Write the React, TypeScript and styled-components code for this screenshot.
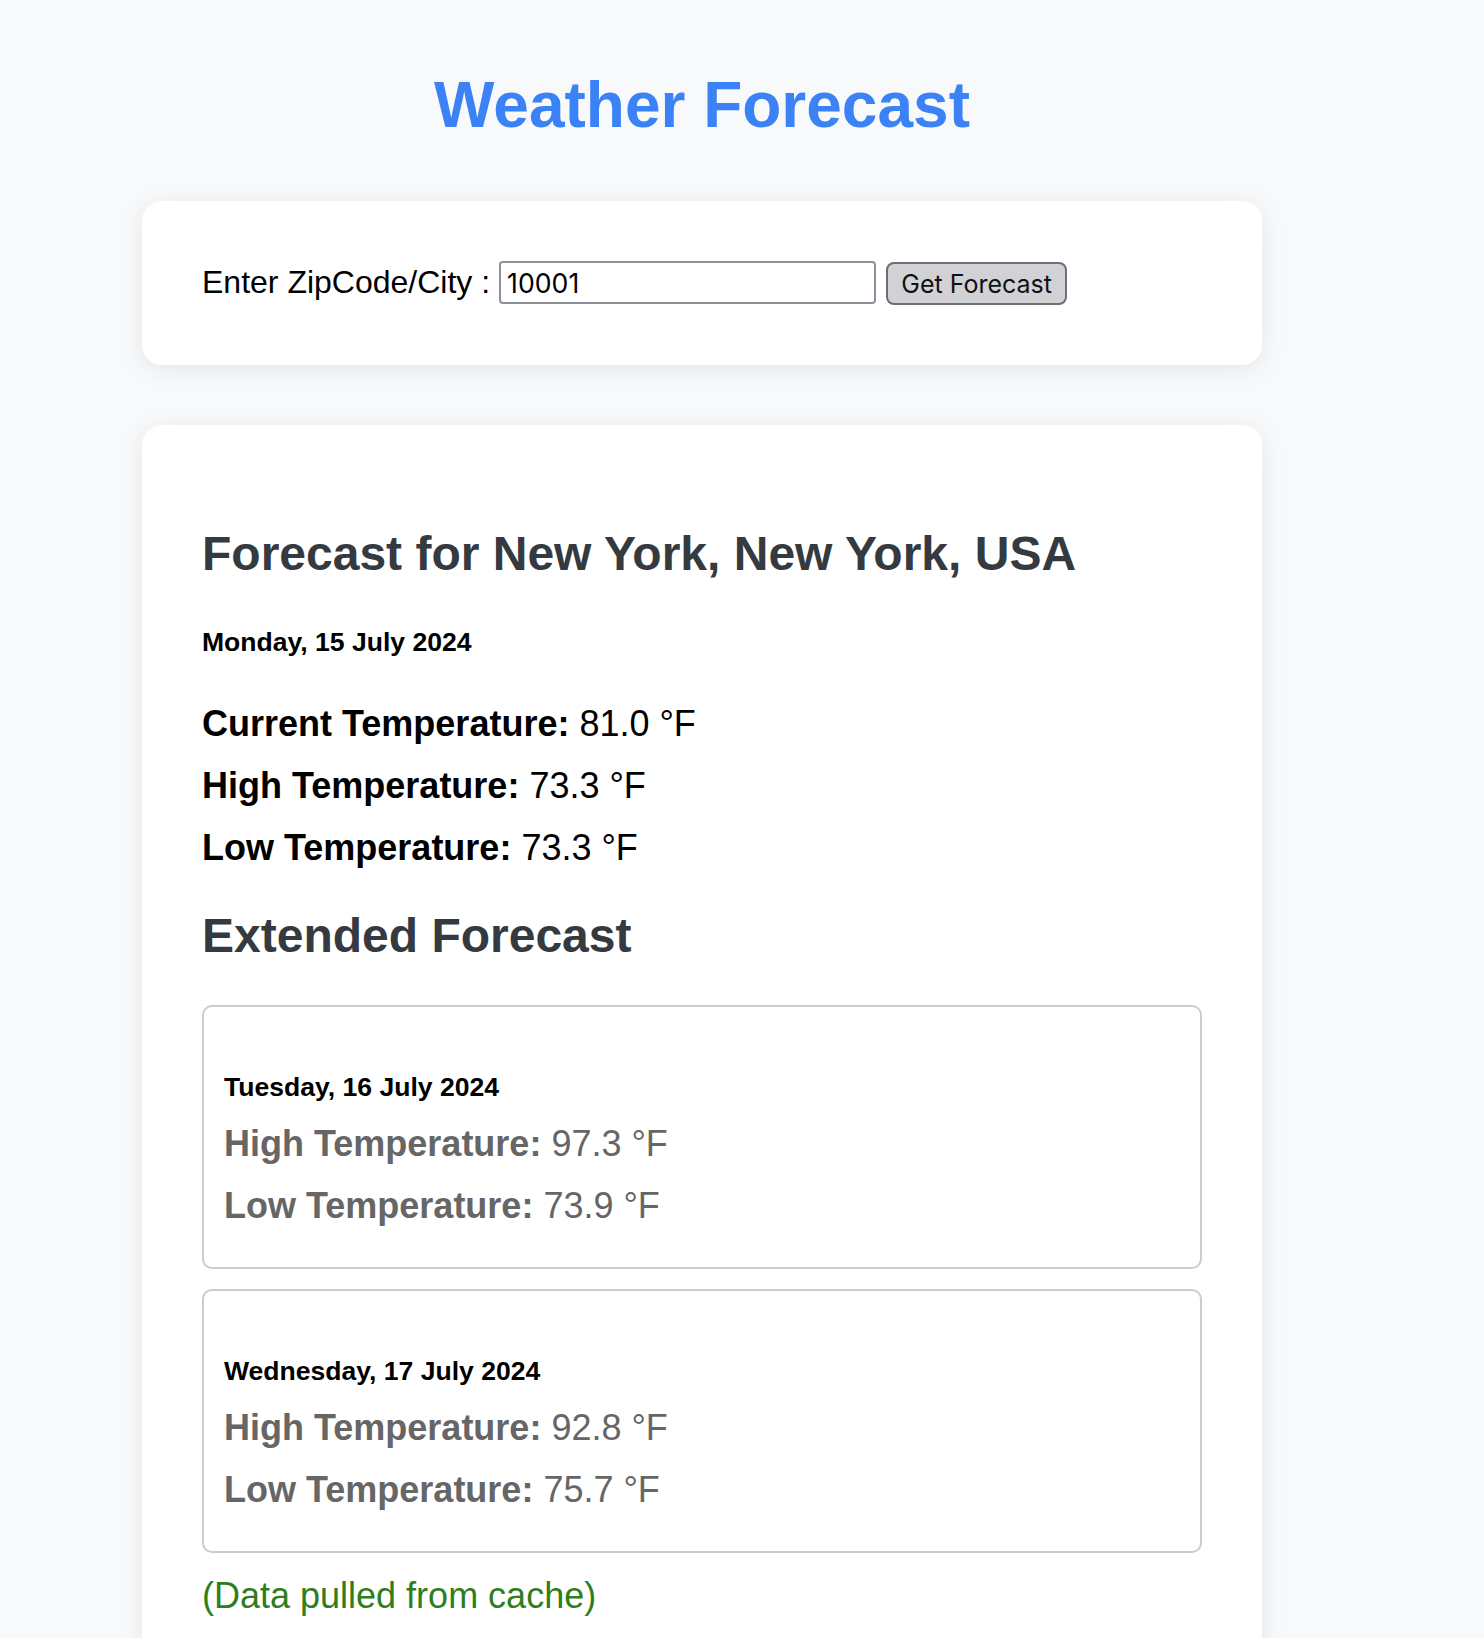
import React, {useState} from "react";
import styled, {createGlobalStyle} from "styled-components";


type DayForecast = { date: string, high: string, low: string }

const extended: DayForecast[] = [
    { date: 'Tuesday, 16 July 2024', high: '97.3', low: '73.9' },
    { date: 'Wednesday, 17 July 2024', high: '92.8', low: '75.7' },
]

const App = () => {

    const [zip, setZip] = useState('10001')

    return <>
        <GlobalStyle/>
        <Page>
            <Title>Weather Forecast</Title>
            <Container>
                <Card>
                    <SearchRow>
                        <Label htmlFor='zip'>Enter ZipCode/City :</Label>
                        <ZipInput id='zip' value={zip} onChange={e=>setZip(e.target.value)}/>
                        <GetButton>Get Forecast</GetButton>
                    </SearchRow>
                </Card>

                <Card>
                    <Heading first>Forecast for New York, New York, USA</Heading>
                    <DateLine>Monday, 15 July 2024</DateLine>
                    <TempLine><b>Current Temperature:</b> 81.0 °F</TempLine>
                    <TempLine><b>High Temperature:</b> 73.3 °F</TempLine>
                    <TempLine><b>Low Temperature:</b> 73.3 °F</TempLine>

                    <Heading>Extended Forecast</Heading>
                    { extended.map(d=>
                        <DayCard key={d.date}>
                            <DayDate>{d.date}</DayDate>
                            <TempLine muted><b>High Temperature:</b> {d.high} °F</TempLine>
                            <TempLine muted><b>Low Temperature:</b> {d.low} °F</TempLine>
                        </DayCard>
                    )}
                    <CacheNote>(Data pulled from cache)</CacheNote>
                </Card>
            </Container>
        </Page>
    </>
}
export default App



const GlobalStyle = createGlobalStyle`
  body {
    margin: 0;
    background: #f8f9fa;
    font-family: 'Liberation Sans', Arial, sans-serif;
  }
`

const Page = styled.div`
  width: 1404px;
  padding-top: 68px;
`
const Title = styled.h1`
  margin: 0 0 59px;
  text-align: center;
  font: 700 64px 'Liberation Sans', Arial, sans-serif;
  color: #3b82f6;
`
const Container = styled.div`
  width: 1120px;
  margin: 0 auto;
`
const Card = styled.div`
  background: white;
  border-radius: 20px;
  padding: 60px;
  margin-bottom: 60px;
  box-shadow: 0 4px 24px rgba(0, 0, 0, 0.08);
`

const SearchRow = styled.div`
  display: flex;
  align-items: baseline;
`
const Label = styled.label`
  font-size: 32px;
  color: black;
`
const ZipInput = styled.input`
  box-sizing: border-box;
  width: 377px; height: 43px;
  margin-left: 9px;
  padding: 0 6px;
  border: 2px solid #8f8f99;
  border-radius: 4px;
  font: 400 26.67px Inter, 'Liberation Sans', sans-serif;
  color: black;
  outline: none;
`
const GetButton = styled.button`
  box-sizing: border-box;
  width: 181px; height: 43px;
  margin-left: 10px;
  padding: 0;
  white-space: nowrap;
  background: #d1d1d6;
  border: 2px solid #6e6e77;
  border-radius: 8px;
  font: 400 25px Inter, 'Liberation Sans', sans-serif;
  color: #111;
  cursor: pointer;
`

const Heading = styled.h2<{ first?: boolean }>`
  margin: ${p=>p.first ? '41px 0 46px' : '39px 0 42px'};
  font: 700 48px 'Liberation Sans', Arial, sans-serif;
  color: #343a40;
`
const DateLine = styled.h5`
  margin: 0 0 45px;
  font: 700 26.56px 'Liberation Sans', Arial, sans-serif;
  color: black;
`
const TempLine = styled.p<{ muted?: boolean }>`
  margin: 20px 0;
  font-size: 36px;
  color: ${p=>p.muted ? '#666666' : 'black'};
`

const DayCard = styled.div`
  border: 2px solid #cccccc;
  border-radius: 10px;
  padding: 20px;
  margin-bottom: 20px;
`
const DayDate = styled.h5`
  margin: 45px 0 20px;
  font: 700 26.56px 'Liberation Sans', Arial, sans-serif;
  color: black;
`
const CacheNote = styled.p`
  margin: 22px 0 0;
  font-size: 36px;
  color: #2e7d20;
`
